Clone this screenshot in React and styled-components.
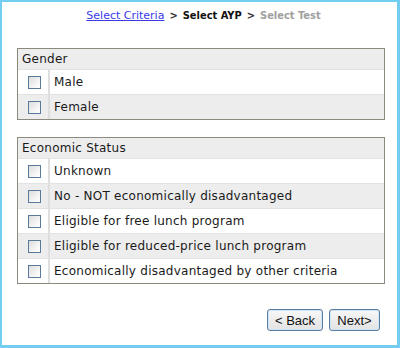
import React from "react";
import styled, { createGlobalStyle } from "styled-components";

const Global = createGlobalStyle`
  html, body { margin: 0; padding: 0; background: #fff; }
  body { font-family: "DejaVu Sans", Verdana, sans-serif; }
`;

const Frame = styled.div`
  box-sizing: border-box;
  width: 400px;
  height: 348px;
  border: 2px solid #72cdf1;
  border-right-width: 3px;
  border-bottom-width: 3px;
  padding: 7px 12px 0 15px;
  display: flex;
  flex-direction: column;
`;

const Crumbs = styled.div`
  text-align: center;
  font-size: 11px;
  line-height: 14px;
  padding-left: 5px;
  color: #000;
`;

const CrumbLink = styled.a`
  color: #3a3ae8;
  text-decoration: underline;
`;

const CrumbBold = styled.span`
  font-family: "DejaVu Sans Condensed", "DejaVu Sans", sans-serif;
  font-weight: bold;
  color: ${(p) => (p.$muted ? "#a0a0a0" : "#111")};
`;

const CrumbSep = styled.span`
  font-family: "DejaVu Sans Condensed", "DejaVu Sans", sans-serif;
  font-weight: bold;
  color: #333;
  margin: 0 5px;
`;

const Group = styled.div`
  border: 1px solid #8b8a7e;
  margin-top: ${(p) => p.$top}px;
  background: #fff;
`;

const Header = styled.div`
  background: #ededed;
  font-size: 12px;
  letter-spacing: 0.25px;
  color: #1a1a1a;
  height: 20px;
  line-height: 21px;
  padding-left: 4px;
  border-bottom: 1px solid #e2e2e2;
`;

const Row = styled.label`
  display: grid;
  grid-template-columns: 32px 1fr;
  height: 24px;
  background: ${(p) => (p.$alt ? "#ededed" : "#fff")};
  border-top: ${(p) => (p.$first ? "none" : "1px solid #e2e2e2")};
  font-size: 12px;
  letter-spacing: 0.25px;
  color: #1a1a1a;
`;

const BoxCell = styled.div`
  display: flex;
  align-items: center;
  justify-content: center;
  padding-left: 3px;
  border-right: 2px solid #dedede;
`;

const Box = styled.span`
  box-sizing: border-box;
  width: 13px;
  height: 13px;
  border: 1px solid #5b7a9b;
  background: linear-gradient(135deg, #dcdcdc 0%, #f4f4f4 60%, #ffffff 100%);
`;

const Text = styled.div`
  display: flex;
  align-items: center;
  padding-left: 4px;
`;

const Buttons = styled.div`
  display: flex;
  justify-content: flex-end;
  gap: 6px;
  margin-top: 25px;
  padding-right: 5px;
`;

const Btn = styled.button`
  box-sizing: border-box;
  height: 22px;
  width: ${(p) => p.$w}px;
  padding: 0;
  border: 1px solid #5a7da0;
  border-radius: 3px;
  background: linear-gradient(#f8f8f8, #e2e2e2);
  box-shadow: inset 0 0 0 1px #cfe4f4;
  font-family: "Liberation Sans", Arial, sans-serif;
  font-size: 13px;
  color: #111;
`;

const groups = [
  { title: "Gender", top: 25, items: ["Male", "Female"] },
  {
    title: "Economic Status",
    top: 17,
    items: [
      "Unknown",
      "No - NOT economically disadvantaged",
      "Eligible for free lunch program",
      "Eligible for reduced-price lunch program",
      "Economically disadvantaged by other criteria",
    ],
  },
];

export default function App() {
  return (
    <>
      <Global />
      <Frame>
        <Crumbs>
          <CrumbLink href="#">Select Criteria</CrumbLink>
          <CrumbSep>&gt;</CrumbSep>
          <CrumbBold>Select AYP</CrumbBold>
          <CrumbSep>&gt;</CrumbSep>
          <CrumbBold $muted>Select Test</CrumbBold>
        </Crumbs>
        {groups.map((g) => (
          <Group key={g.title} $top={g.top}>
            <Header>{g.title}</Header>
            {g.items.map((it, i) => (
              <Row key={it} $alt={i % 2 === 1} $first={i === 0}>
                <BoxCell>
                  <Box />
                </BoxCell>
                <Text>{it}</Text>
              </Row>
            ))}
          </Group>
        ))}
        <Buttons>
          <Btn $w={56}>&lt; Back</Btn>
          <Btn $w={51}>Next&gt;</Btn>
        </Buttons>
      </Frame>
    </>
  );
}
